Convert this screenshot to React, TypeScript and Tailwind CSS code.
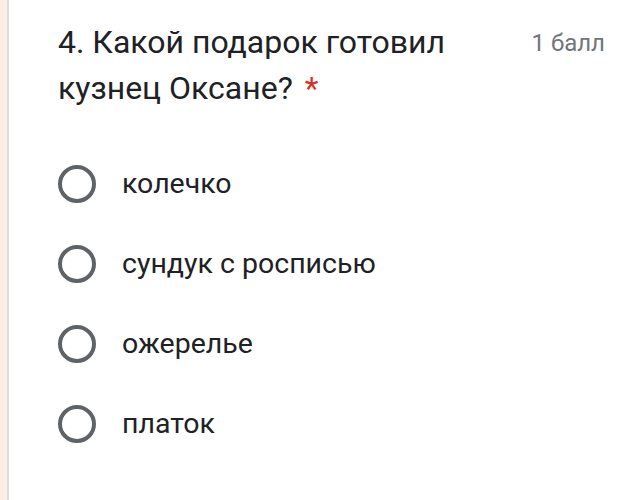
export default function App() {
    const options = ["колечко", "сундук с росписью", "ожерелье", "платок"];

    return (
        <div className="flex h-[500px] w-[631px] bg-white" style={{ fontFamily: "Roboto, 'Noto Sans', sans-serif" }}>
            {/* left card edge */}
            <div className="w-[7px] bg-[#fdeee3]" />
            <div className="w-[2px] bg-[#dadce0]" />
            <div className="flex-1 pl-[49px] pr-[26px] pt-[19px]">
                <div className="flex items-start justify-between">
                    <div className="w-[440px] text-[32px] leading-[46px] text-[#202124]">
                        4. Какой подарок готовил кузнец Оксане?
                        <span className="ml-[12px] text-[#d93025]">*</span>
                    </div>
                    <div className="pt-[7px] text-[24px] leading-[34px] text-[#70757a]">1 балл</div>
                </div>
                <div className="mt-[54px] flex flex-col gap-[42px]">
                    {options.map((o) => (
                        <div key={o} className="flex items-center">
                            <div className="h-[38px] w-[38px] shrink-0 rounded-full border-[4px] border-[#5f6368]" />
                            <span className="ml-[26px] text-[28.5px] leading-[38px] text-[#202124]">{o}</span>
                        </div>
                    ))}
                </div>
            </div>
        </div>
    );
}
